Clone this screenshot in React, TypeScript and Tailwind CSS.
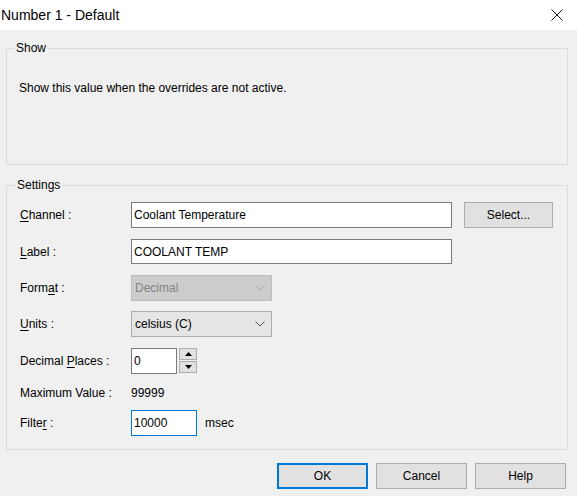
import React from 'react'

const font = { fontFamily: '"Liberation Sans", Arial, sans-serif' }

function Chevron({ color }: { color: string }) {
  return (
    <svg width="10" height="6" viewBox="0 0 10 6" className="shrink-0">
      <polyline points="0.5,0.5 5,5 9.5,0.5" fill="none" stroke={color} strokeWidth="1" />
    </svg>
  )
}

// letter with a mnemonic underline
function Mn({ before, key_, after }: { before: string; key_: string; after: string }) {
  return (
    <span>
      {before}
      <span className="underline underline-offset-2">{key_}</span>
      {after}
    </span>
  )
}

function Row({ label, mt, h = 26, children }: { label: React.ReactNode; mt: string; h?: string | number; children?: React.ReactNode }) {
  return (
    <div className={`flex items-center ${mt}`} style={{ height: h }}>
      <div className="w-[111px] shrink-0 text-black">{label}</div>
      {children}
    </div>
  )
}

export default function App() {
  return (
    <div className="w-[577px] h-[496px] bg-[#f0f0f0] flex flex-col text-[12px] text-black overflow-hidden" style={font}>
      {/* Title bar */}
      <div className="h-[30px] bg-white flex items-center justify-between shrink-0">
        <span className="pl-[1px] text-[14px] text-black">Number 1 - Default</span>
        <svg width="12" height="12" viewBox="0 0 12 12" className="mr-[14px]">
          <path d="M0.5 0.5 L11.5 11.5 M11.5 0.5 L0.5 11.5" stroke="#111" strokeWidth="1" />
        </svg>
      </div>

      <div className="pl-[6px] pr-[9px] pt-[18px]">
        {/* Show */}
        <div className="h-[117px] border border-[#dcdcdc] flex flex-col">
          <span className="self-start -mt-[9px] ml-[7px] px-[2px] bg-[#f0f0f0] leading-[16px]">Show</span>
          <p className="mt-[24px] ml-[12px] leading-[16px]">Show this value when the overrides are not active.</p>
        </div>

        {/* Settings */}
        <div className="mt-[20px] h-[265px] border border-[#dcdcdc] flex flex-col pl-[13px]">
          <span className="self-start -mt-[9px] -ml-[5px] px-[2px] bg-[#f0f0f0] leading-[16px]">Settings</span>

          <Row label={<Mn before="" key_="C" after="hannel :" />} mt="mt-[9px]">
            <div className="w-[321px] h-full bg-white border border-[#7a7a7a] flex items-center px-[2px]">Coolant Temperature</div>
            <button className="ml-[12px] w-[89px] h-full bg-[#e1e1e1] border border-[#adadad] text-black">Select...</button>
          </Row>

          <Row label={<Mn before="" key_="L" after="abel :" />} mt="mt-[11px]" h={25}>
            <div className="w-[321px] h-full bg-white border border-[#7a7a7a] flex items-center px-[2px]">COOLANT TEMP</div>
          </Row>

          <Row label={<Mn before="Form" key_="a" after="t :" />} mt="mt-[11px]">
            <div className="w-[141px] h-full bg-[#cccccc] border border-[#bfbfbf] flex items-center justify-between pl-[3px] pr-[6px] text-[#838383]">
              Decimal
              <Chevron color="#a8a8a8" />
            </div>
          </Row>

          <Row label={<Mn before="" key_="U" after="nits :" />} mt="mt-[10px]">
            <div className="w-[141px] h-full bg-[#e5e5e5] border border-[#adadad] flex items-center justify-between pl-[3px] pr-[6px]">
              celsius (C)
              <Chevron color="#555" />
            </div>
          </Row>

          <Row label={<Mn before="Decimal " key_="P" after="laces :" />} mt="mt-[11px]">
            <div className="w-[46px] h-full bg-white border border-[#7a7a7a] flex items-center px-[2px]">0</div>
            <div className="ml-[2px] flex flex-col gap-[1px] self-start">
              <div className="w-[18px] h-[12px] bg-[#e1e1e1] border border-[#adadad] flex items-center justify-center">
                <svg width="7" height="4" viewBox="0 0 7 4"><polygon points="3.5,0 7,4 0,4" fill="#000" /></svg>
              </div>
              <div className="w-[18px] h-[12px] bg-[#e1e1e1] border border-[#adadad] flex items-center justify-center">
                <svg width="7" height="4" viewBox="0 0 7 4"><polygon points="0,0 7,0 3.5,4" fill="#000" /></svg>
              </div>
            </div>
          </Row>

          <Row label="Maximum Value :" mt="mt-[9px]" h={20}>
            <span>99999</span>
          </Row>

          <Row label={<Mn before="Filte" key_="r" after=" :" />} mt="mt-[7px]">
            <div className="w-[66px] h-full bg-white border border-[#0078d7] flex items-center px-[2px]">10000</div>
            <span className="ml-[8px]">msec</span>
          </Row>
        </div>

        {/* Buttons */}
        <div className="mt-[13px] flex justify-end gap-[8px] pr-[2px]">
          <button className="w-[91px] h-[26px] bg-[#e1e1e1] border-2 border-[#0078d7] text-black">OK</button>
          <button className="w-[91px] h-[26px] bg-[#e1e1e1] border border-[#adadad] text-black">Cancel</button>
          <button className="w-[91px] h-[26px] bg-[#e1e1e1] border border-[#adadad] text-black">Help</button>
        </div>
      </div>
    </div>
  )
}
